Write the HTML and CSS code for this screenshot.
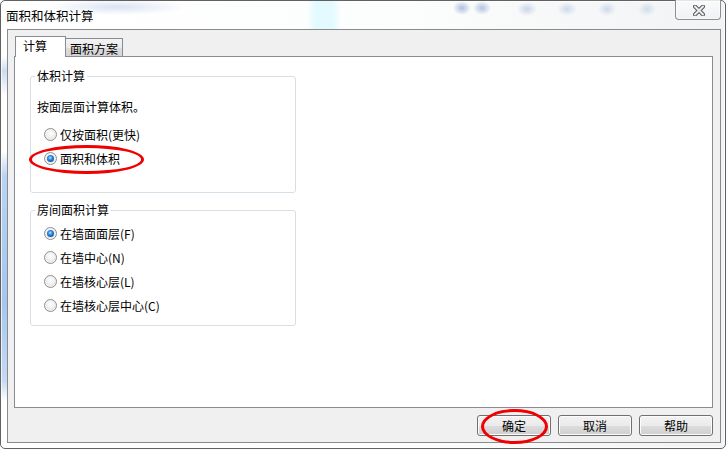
FILE: index.html
```html
<!DOCTYPE html>
<html lang="zh-CN">
<head>
    <meta charset="UTF-8">
    <meta name="viewport" content="width=device-width, initial-scale=1.0">
    <title>面积和体积计算</title>
    <link rel="stylesheet" href="styles.css">
</head>
<body>
    <div class="window">
        <div class="titlebar">
            <span class="title">面积和体积计算</span>
            <div class="close">
                <svg width="12" height="11" viewBox="0 0 12 11">
                    <path d="M2 1.5 L10 9.5 M10 1.5 L2 9.5" stroke="#5a5a5a" stroke-width="4" stroke-linecap="round"/>
                    <path d="M2 1.5 L10 9.5 M10 1.5 L2 9.5" stroke="#eeeeee" stroke-width="2" stroke-linecap="round"/>
                </svg>
            </div>
        </div>

        <div class="client">
            <div class="tabs">
                <div class="tab active">计算</div>
                <div class="tab">面积方案</div>
            </div>

            <div class="panel">
                <fieldset class="group group-volume">
                    <legend>体积计算</legend>
                    <p class="note">按面层面计算体积。</p>
                    <label class="option"><span class="radio"></span>仅按面积(更快)</label>
                    <label class="option"><span class="radio checked"></span>面积和体积</label>
                </fieldset>

                <fieldset class="group group-room">
                    <legend>房间面积计算</legend>
                    <label class="option"><span class="radio checked"></span>在墙面面层(F)</label>
                    <label class="option"><span class="radio"></span>在墙中心(N)</label>
                    <label class="option"><span class="radio"></span>在墙核心层(L)</label>
                    <label class="option"><span class="radio"></span>在墙核心层中心(C)</label>
                </fieldset>
            </div>

            <div class="buttons">
                <button class="btn">确定</button>
                <button class="btn">取消</button>
                <button class="btn">帮助</button>
            </div>
        </div>
    </div>

    <!-- red hand-drawn marks from the tutorial -->
    <div class="mark mark-option"></div>
    <div class="mark mark-ok"></div>
</body>
</html>
```

FILE: styles.css
```css
body {
    margin: 0;
    width: 728px;
    height: 450px;
    overflow: hidden;
    background: #fbfdfe;
    font-family: "Noto Sans CJK SC", "Noto Sans", sans-serif;
    font-size: 12px;
    color: #000;
    position: relative;
}

/* Aero frame */
.window {
    width: 726px;
    height: 449px;
    box-sizing: border-box;
    border: 1px solid #616161;
    border-radius: 5px 5px 5px 5px;
    padding: 0 4px 5px 6px;
    display: flex;
    flex-direction: column;
    background:
        linear-gradient(to bottom, rgba(170, 200, 240, 0) 150px, #b8d3f4 175px, #a6c6ef 300px, #c4daf5 380px, rgba(196, 218, 245, 0) 400px) left top / 7px 100% no-repeat,
        linear-gradient(to bottom, rgba(180, 205, 240, 0) 55px, rgba(180, 205, 240, 0.7) 70px, rgba(180, 205, 240, 0) 95px) left top / 7px 100% no-repeat,
        linear-gradient(to right, #ffffff, #fcfdfd 55%, #f1f3f4);
    box-shadow: inset 0 0 0 1px rgba(255, 255, 255, 0.7);
}

.titlebar {
    height: 28px;
    display: flex;
    align-items: center;
    background:
        radial-gradient(ellipse 9px 7px at 455px 7px, rgba(110, 140, 195, 0.55), rgba(110, 140, 195, 0)),
        radial-gradient(ellipse 9px 7px at 475px 7px, rgba(110, 140, 195, 0.5), rgba(110, 140, 195, 0)),
        radial-gradient(ellipse 10px 7px at 520px 8px, rgba(130, 160, 210, 0.4), rgba(130, 160, 210, 0)),
        radial-gradient(ellipse 10px 7px at 560px 8px, rgba(130, 160, 210, 0.35), rgba(130, 160, 210, 0)),
        radial-gradient(ellipse 9px 7px at 600px 8px, rgba(130, 160, 210, 0.35), rgba(130, 160, 210, 0)),
        radial-gradient(ellipse 9px 7px at 640px 8px, rgba(130, 160, 210, 0.3), rgba(130, 160, 210, 0)),
        radial-gradient(ellipse 70px 8px at 110px 6px, rgba(175, 195, 230, 0.45), rgba(175, 195, 230, 0)),
        linear-gradient(to right, rgba(225, 250, 255, 0) 300px, #e3fbff 308px, #e3fbff 326px, rgba(225, 250, 255, 0) 334px);
}

.title {
    font-size: 12.5px;
    margin-left: -1px;
    margin-top: 0;
    text-shadow: 0 0 6px #fff, 0 0 3px #fff;
}

.close {
    margin-left: auto;
    align-self: flex-start;
    margin-top: -1px;
    width: 46px;
    height: 20px;
    box-sizing: border-box;
    border: 1px solid #8e8e8e;
    border-top: none;
    border-radius: 0 0 4px 4px;
    background: linear-gradient(to bottom, rgba(255, 255, 255, 0.6), rgba(235, 240, 245, 0.5));
    box-shadow: inset 0 0 0 1px rgba(255, 255, 255, 0.6);
    display: flex;
    justify-content: center;
    align-items: center;
}

.close svg {
    margin-top: 1px;
    margin-left: 2px;
}

/* client area */
.client {
    flex: 1;
    border: 1px solid #8a8a8a;
    background: #f0f0f0;
    padding: 6px 7px 6px 6px;
    display: flex;
    flex-direction: column;
}

.tabs {
    height: 20px;
    display: flex;
    align-items: flex-end;
    padding-left: 1px;
    position: relative;
    z-index: 1;
}

.tab {
    height: 18px;
    box-sizing: border-box;
    border: 1px solid #898c95;
    border-bottom: none;
    padding: 3px 4px 0 4px;
    line-height: 14px;
    background: linear-gradient(to bottom, #f3f3f3, #ebebeb 50%, #dddddd 51%, #d4d4d4);
    margin-left: -1px;
}

.tab.active {
    height: 21px;
    margin-bottom: -1px;
    width: 51px;
    padding: 2px 0 0 7px;
    background: #fff;
    margin-left: 0;
    position: relative;
    z-index: 2;
}

.panel {
    height: 352px;
    box-sizing: border-box;
    border: 1px solid #898c95;
    background: #fff;
    padding: 12px 0 0 15px;
}

.group {
    width: 266px;
    box-sizing: border-box;
    margin: 0;
    padding: 0 6px 0 6px;
    border: 1px solid #d5dfe5;
    border-radius: 3px;
    min-width: 0;
}

.group legend {
    padding: 0 2px;
    margin-left: -2px;
    line-height: 14px;
}

.group-volume {
    padding-bottom: 22px;
}

.group-room {
    margin-top: 10px;
    padding-top: 4px;
    padding-bottom: 8px;
}

.note {
    margin: 17px 0 8px 0;
    line-height: 14px;
}

.option {
    height: 24px;
    display: flex;
    align-items: center;
    padding-left: 7px;
}

/* win7 radio */
.radio {
    width: 13px;
    height: 13px;
    box-sizing: border-box;
    border-radius: 50%;
    border: 1px solid #8e8f8f;
    background: radial-gradient(circle at 50% 40%, #ffffff, #f0f0f0 45%, #d4d4d4);
    box-shadow: inset 0 0 0 1px #f4f4f4;
    margin-right: 3px;
    display: flex;
    justify-content: center;
    align-items: center;
}

.radio.checked::after {
    content: "";
    width: 7px;
    height: 7px;
    border-radius: 50%;
    background: radial-gradient(circle at 45% 40%, #bfe9ff, #2c8ce6 35%, #0f4d9e 80%, #1b3c6e);
}

.buttons {
    margin-top: 7px;
    display: flex;
    justify-content: flex-end;
    gap: 7px;
}

.btn {
    width: 74px;
    height: 21px;
    padding: 0;
    font-family: inherit;
    font-size: 12px;
    color: #000;
    border: 1px solid #707070;
    border-radius: 3px;
    background: linear-gradient(to bottom, #f2f2f2, #ebebeb 50%, #dddddd 51%, #cfcfcf);
    box-shadow: inset 0 0 0 1px #fcfcfc;
}

/* annotation ellipses */
.mark {
    position: absolute;
    box-sizing: border-box;
    border: 3px solid #f00000;
    border-radius: 50%;
}

.mark-option {
    left: 29px;
    top: 145px;
    width: 115px;
    height: 29px;
}

.mark-ok {
    left: 481px;
    top: 409px;
    width: 67px;
    height: 35px;
}
```
